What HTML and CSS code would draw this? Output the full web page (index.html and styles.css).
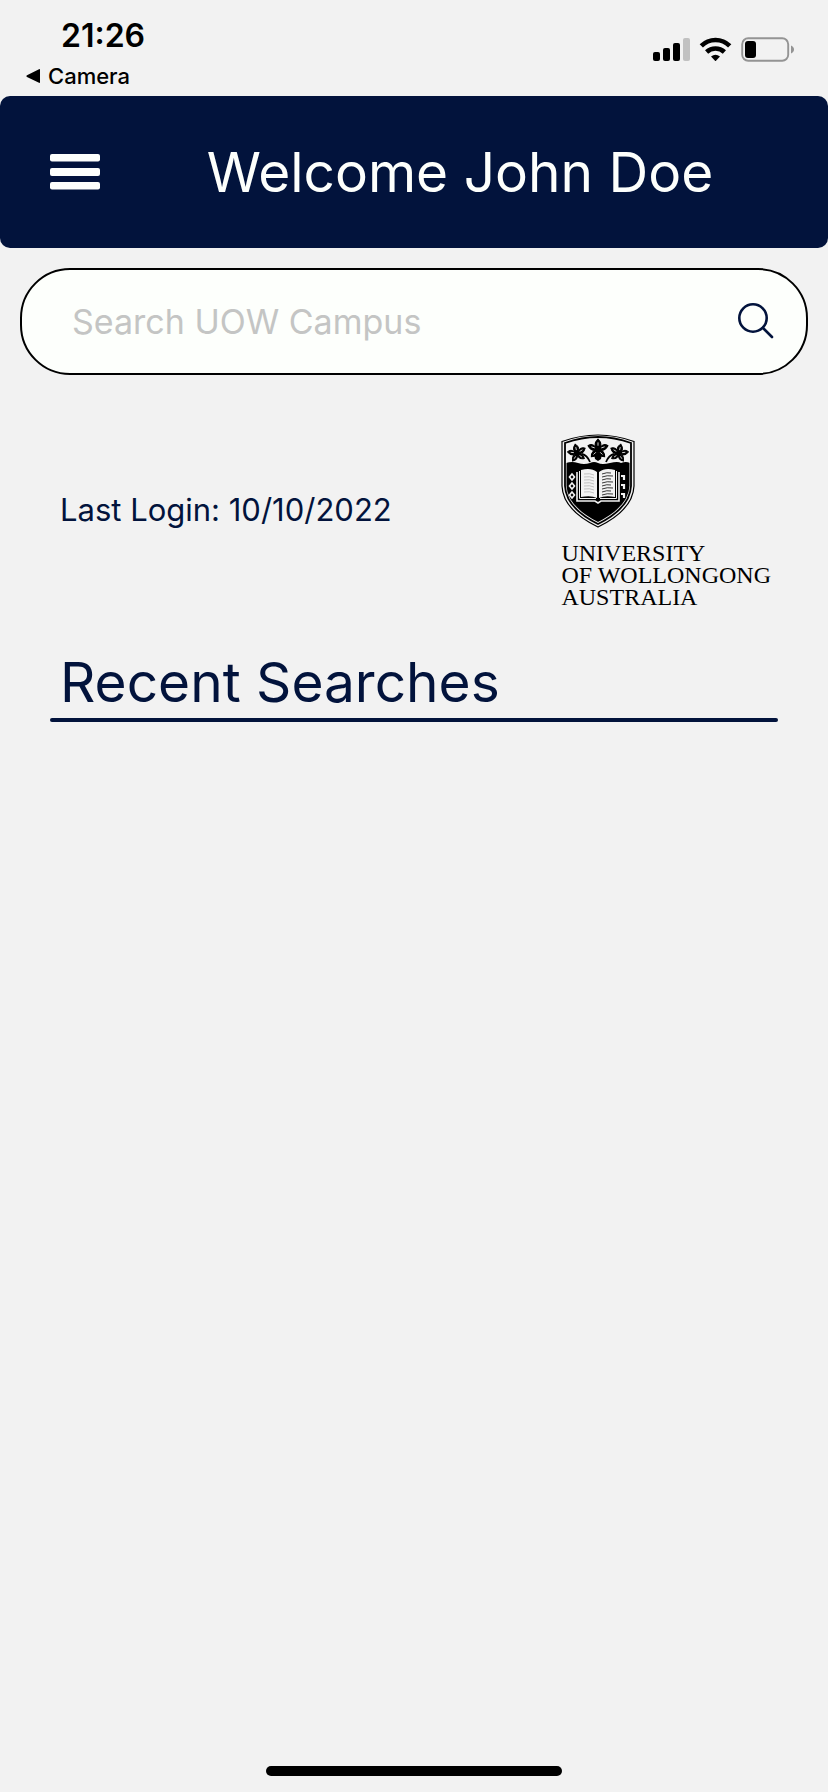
FILE: index.html
```html
<!DOCTYPE html>
<html lang="en">
<head>
<meta charset="utf-8">
<meta name="viewport" content="width=device-width, initial-scale=1">
<title>UOW Campus</title>
<link rel="stylesheet" href="styles.css">
</head>
<body>
<div class="screen">
  <div class="status">
    <div class="status-left">
      <time class="clock">21:26</time>
      <a class="back" href="#camera">
        <svg class="back-icon" width="16" height="16" viewBox="0 0 16 16" aria-hidden="true"><path d="M14 1.8v12.4q0 1-1 .6L1 9Q-.3 8 1 7.200L13 1.200q1-.4 1 .6z"/></svg>
        <span>Camera</span>
      </a>
    </div>
    <svg class="indicators" width="142" height="26" viewBox="0 0 142 26" aria-hidden="true">
      <rect x="0" y="15" width="7" height="9" rx="2"/>
      <rect x="10" y="11" width="7" height="13" rx="2"/>
      <rect x="20" y="6" width="7" height="18" rx="2"/>
      <rect x="30" y="1" width="7" height="23" rx="2" fill="#c1c1c1"/>
      <g fill="none" stroke="#000" stroke-width="4.600">
        <path d="M48.300 8.900a20 20 0 0 1 28.400 0"/>
        <path d="M53.600 15a13 13 0 0 1 17.800 0"/>
      </g>
      <path d="M58 19.600q4.500-3.800 9 0L63 23.700q-.5.500-1 0z"/>
      <rect x="89.200" y="1.200" width="46" height="22.600" rx="6" fill="none" stroke="#949494" stroke-width="1.900"/>
      <rect x="92" y="4" width="11" height="17" rx="3"/>
      <path d="M138 8.500c4 1.500 4 6.500 0 8z" fill="#949494"/>
    </svg>
  </div>

  <header class="topbar">
    <button class="menu" type="button" aria-label="Open menu">
      <svg width="50" height="36" viewBox="0 0 50 36" aria-hidden="true">
        <rect width="50" height="7.500" rx="2"/><rect y="14" width="50" height="8" rx="2"/><rect y="28" width="50" height="7.500" rx="2"/>
      </svg>
    </button>
    <h1 class="title">Welcome John Doe</h1>
  </header>

  <main>
    <form class="search" role="search">
      <input class="search-input" type="search" placeholder="Search UOW Campus" aria-label="Search UOW Campus">
      <button class="search-button" type="submit" aria-label="Search">
        <svg width="36" height="38" viewBox="0 0 36 38" aria-hidden="true"><circle cx="15" cy="15" r="13.700"/><path d="M25 25l9 9"/></svg>
      </button>
    </form>

    <section class="info">
      <p class="login">Last Login: 10/10/2022</p>
      <div class="brand">
        <svg class="crest" width="74" height="94" viewBox="0 0 74 94" aria-hidden="true">
          <defs>
            <clipPath id="shield"><path d="M5.500 10Q37-1 68.500 10V52Q67.500 72.500 37 88 6.500 72.500 5.500 52z"/></clipPath>
            <g id="flower">
              <path d="M0 1C-4-3-3-6 0-9 3-6 4-3 0 1zM0 1C3-4 6-5 9-3 7 1 4 2 0 1zM0 1C4 1 6 3 6 7 2 7 0 5 0 1zM0 1C0 5-2 7-6 7-6 3-4 1 0 1zM0 1C-4 2-7 1-9-3-6-5-3-4 0 1z" stroke="#000" stroke-width="1"/>
              <path d="M0-3v-3M3-1l3-1M-3-1l-3-1M2 3l2 2M-2 3l-2 2" stroke="#f2f2f2" stroke-width=".8"/>
              <circle cy="1" r="1.800"/>
            </g>
          </defs>
          <path d="M1 7.500Q37-5.500 73 7.500V52Q72 76 37 93 2 76 1 52z" fill="#f2f2f2" stroke="#000" stroke-width="1.200"/>
          <path d="M4 9Q37-3 70 9V52Q69 74 37 90 5 74 4 52z" fill="#f2f2f2" stroke="#000" stroke-width="1.800"/>
          <path clip-path="url(#shield)" d="M5 29Q11 27 17 29T29 29Q33 27 37 29T49 29T60 29Q65 27 69 29V95H5z"/>
          <use href="#flower" x="16" y="19" transform="rotate(-12 16 19)"/>
          <path d="M21 20q5 1 8 8M53 20q-5 1-8 8" fill="none" stroke="#000" stroke-width="1.800"/>
          <use href="#flower" x="58" y="19" transform="rotate(12 58 19)"/>
          <use href="#flower" transform="translate(37 15) scale(1.100)"/>
          <path d="M33 20h8l-1 5-3 2-3-2z"/>
          <g fill="none" stroke="#f2f2f2">
            <path d="M16 38v29h18l3 2 3-2h18V38" stroke-width="1.600"/>
            <path d="M18.500 37v27.500H35M55.500 37v27.500H39" stroke-width="1"/>
          </g>
          <path d="M20 36Q30 33 36 38v26q-6-3-16-1zM54 36Q44 33 38 38v26q6-3 16-1z" fill="#f2f2f2"/>
          <path d="M41 40q5-2 9-1M41 43q5-2 11-1M41 46q5-2 9-1M41 49q5-2 11-1M41 52q5-2 9-1M41 55q5-2 11-1M41 58q5-2 9-1M41 61q5-2 11-1" fill="none" stroke="#222" stroke-width=".9"/>
          <path d="M23 40q6-1 10 1M23 43q6-1 10 1M23 46q6-1 10 1M23 49q6-1 10 1M23 52q6-1 10 1M23 55q6-1 10 1M23 58q6-1 10 1" fill="none" stroke="#b4b4b4" stroke-width=".8"/>
          <g fill="#000" stroke="#f2f2f2" stroke-width="1.600">
            <path d="M11 40l2.500 3-2.500 3-2.500-3zM11 49l2.500 3-2.500 3-2.500-3zM11 58l2.500 3-2.500 3-2.500-3z"/>
            <path d="M60 42h3v4M60 51h3v4M60 60h3v4" fill="none" stroke-width="2.200"/>
          </g>
        </svg>
        <p class="wordmark">UNIVERSITY<br>OF WOLLONGONG<br>AUSTRALIA</p>
      </div>
    </section>

    <h2 class="section-title">Recent Searches</h2>
    <hr class="rule">
  </main>
  <div class="home-indicator"></div>
</div>
</body>
</html>
```
FILE: styles.css
```css
* { box-sizing: border-box; }

body {
  margin: 0;
  background: #f2f2f2;
  color: #02133c;
  font-family: Inter, Roboto, sans-serif;
}

h1, h2, p { margin: 0; font-weight: 400; }

button { padding: 0; border: 0; background: none; cursor: pointer; }

svg { display: block; }

.screen {
  display: flex;
  flex-direction: column;
  min-height: 100vh;
}

.status {
  display: flex;
  justify-content: space-between;
  align-items: flex-start;
  height: 96px;
  padding: 16px 33px 0 26px;
  color: #000;
}

.clock {
  display: block;
  padding-left: 35px;
  font-size: 32px;
  line-height: 40px;
  font-weight: 600;
}

.back {
  display: flex;
  align-items: center;
  gap: 6px;
  margin-top: 7px;
  color: inherit;
  font-size: 22px;
  line-height: 26px;
  font-weight: 500;
  text-decoration: none;
}

.indicators { margin-top: 21px; }

.topbar {
  display: flex;
  align-items: center;
  height: 152px;
  padding: 0 50px;
  border-radius: 10px;
  background: #02133c;
  color: #fdfffc;
}

.menu { fill: #fdfffc; }

.title {
  flex: 1;
  padding-left: 42px;
  font-size: 55px;
  line-height: 72px;
  text-align: center;
}

.search {
  display: flex;
  align-items: center;
  height: 107px;
  margin: 20px 20px 0;
  padding: 0 32px 0 50px;
  border: 2px solid #000;
  border-radius: 50px;
  background: #fdfffc;
}

.search-input {
  flex: 1;
  min-width: 0;
  padding: 0;
  border: 0;
  outline: 0;
  background: none;
  color: #02133c;
  font: 400 34px/44px Inter, Roboto, sans-serif;
  appearance: none;
}

.search-input::placeholder { color: #c4c5c4; opacity: 1; }

.search-button svg {
  fill: none;
  stroke: #02133c;
  stroke-width: 2.600;
  stroke-linecap: round;
}

.info {
  display: flex;
  justify-content: space-between;
  align-items: flex-start;
  margin: 59px 57px 0 60px;
}

.login {
  padding-top: 56px;
  font-size: 31px;
  line-height: 40px;
}

.wordmark {
  margin-top: 14px;
  color: #000;
  font-family: "Liberation Serif", serif;
  font-size: 24px;
  line-height: 22px;
}

.section-title {
  margin: 38px 50px 0;
  padding: 0 10px;
  font-size: 55px;
  line-height: 72px;
}

.rule {
  height: 4px;
  margin: 0 50px;
  border: 0;
  border-radius: 2px;
  background: #02133c;
}

.home-indicator {
  width: 296px;
  max-width: 60%;
  height: 10px;
  margin: auto auto 16px;
  border-radius: 5px;
  background: #000;
}
```
